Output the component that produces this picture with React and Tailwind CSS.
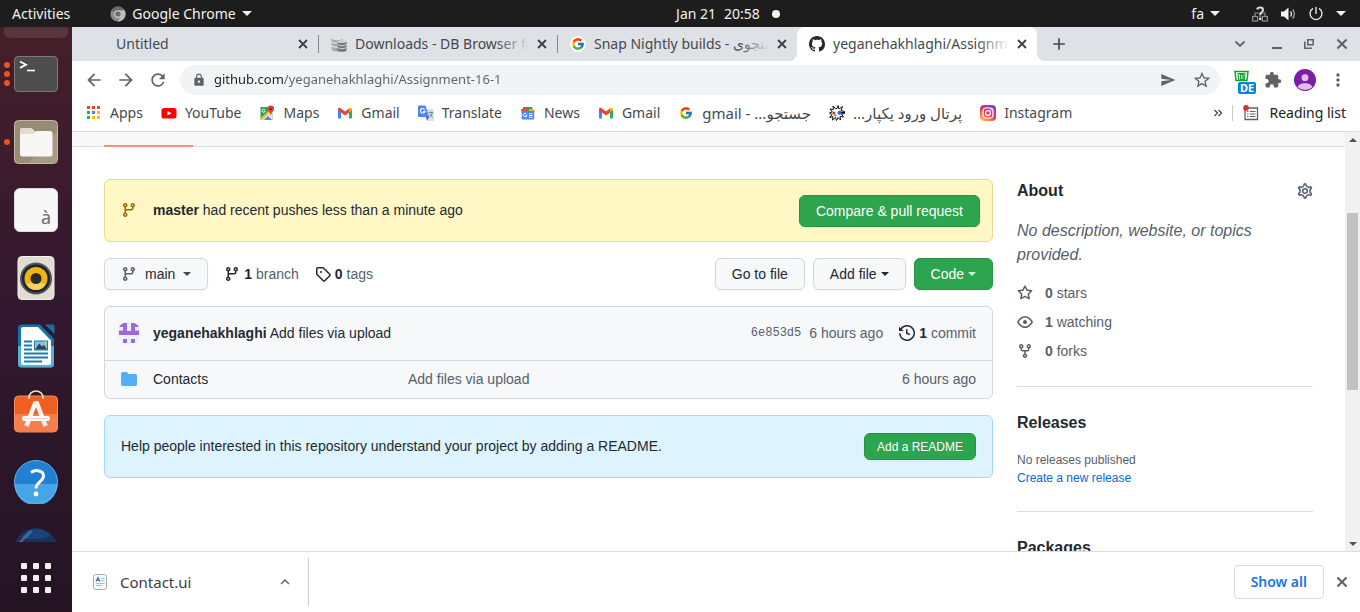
import {
  MdArrowBack,
  MdArrowForward,
  MdExpandLess,
  MdExtension,
  MdLock,
  MdMoreVert,
  MdAdd,
  MdRefresh,
  MdSend,
  MdStarBorder,
} from "react-icons/md";
import { FcGoogle } from "react-icons/fc";

/* ---------- shared glyphs ---------- */

const OCTICONS = {
  branch:
    "M11.75 2.5a.75.75 0 100 1.5.75.75 0 000-1.5zm-2.25.75a2.25 2.25 0 113 2.122V6A2.5 2.5 0 0110 8.5H6a1 1 0 00-1 1v1.128a2.251 2.251 0 11-1.5 0V5.372a2.25 2.25 0 111.5 0v1.836A2.492 2.492 0 016 7h4a1 1 0 001-1v-.628A2.25 2.25 0 019.5 3.25zM4.25 12a.75.75 0 100 1.5.75.75 0 000-1.5zM3.5 3.25a.75.75 0 111.5 0 .75.75 0 01-1.5 0z",
  tag: "M2.5 7.775V2.75a.25.25 0 01.25-.25h5.025a.25.25 0 01.177.073l6.25 6.25a.25.25 0 010 .354l-5.025 5.025a.25.25 0 01-.354 0l-6.25-6.25a.25.25 0 01-.073-.177zm-1.5 0V2.75C1 1.784 1.784 1 2.75 1h5.025c.464 0 .91.184 1.238.513l6.25 6.25a1.75 1.75 0 010 2.474l-5.026 5.026a1.75 1.75 0 01-2.474 0l-6.25-6.25A1.75 1.75 0 011 7.775zM6 5a1 1 0 100 2 1 1 0 000-2z",
  history:
    "M1.643 3.143L.427 1.927A.25.25 0 000 2.104V5.75c0 .138.112.25.25.25h3.646a.25.25 0 00.177-.427L2.715 4.215a6.5 6.5 0 11-1.18 4.458.75.75 0 10-1.493.154 8.001 8.001 0 101.6-5.684zM7.75 4a.75.75 0 01.75.75v2.992l2.028.812a.75.75 0 01-.557 1.392l-2.5-1A.75.75 0 017 8.25v-3.5A.75.75 0 017.75 4z",
  star: "M8 .25a.75.75 0 01.673.418l1.882 3.815 4.21.612a.75.75 0 01.416 1.279l-3.046 2.97.719 4.192a.75.75 0 01-1.088.791L8 12.347l-3.766 1.98a.75.75 0 01-1.088-.79l.72-4.194L.818 6.374a.75.75 0 01.416-1.28l4.21-.611L7.327.668A.75.75 0 018 .25zm0 2.445L6.615 5.5a.75.75 0 01-.564.41l-3.097.45 2.24 2.184a.75.75 0 01.216.664l-.528 3.084 2.769-1.456a.75.75 0 01.698 0l2.77 1.456-.53-3.084a.75.75 0 01.216-.664l2.24-2.183-3.096-.45a.75.75 0 01-.564-.41L8 2.694v.001z",
  eye: "M1.679 7.932c.412-.621 1.242-1.75 2.366-2.717C5.175 4.242 6.527 3.5 8 3.5c1.473 0 2.824.742 3.955 1.715 1.124.967 1.954 2.096 2.366 2.717a.119.119 0 010 .136c-.412.621-1.242 1.75-2.366 2.717C10.825 11.758 9.473 12.5 8 12.5c-1.473 0-2.824-.742-3.955-1.715C2.92 9.818 2.09 8.69 1.679 8.068a.119.119 0 010-.136zM8 2c-1.981 0-3.67.992-4.933 2.078C1.797 5.169.88 6.423.43 7.1a1.619 1.619 0 000 1.798c.45.678 1.367 1.932 2.637 3.024C4.329 13.008 6.019 14 8 14c1.981 0 3.67-.992 4.933-2.078 1.27-1.091 2.187-2.345 2.637-3.023a1.619 1.619 0 000-1.798c-.45-.678-1.367-1.932-2.637-3.023C11.671 2.992 9.981 2 8 2zm0 8a2 2 0 100-4 2 2 0 000 4z",
  fork: "M5 3.25a.75.75 0 11-1.5 0 .75.75 0 011.5 0zm0 2.122a2.25 2.25 0 10-1.5 0v.878A2.25 2.25 0 005.75 8.5h1.5v2.128a2.251 2.251 0 101.5 0V8.5h1.5a2.25 2.25 0 002.25-2.25v-.878a2.25 2.25 0 10-1.5 0v.878a.75.75 0 01-.75.75h-4.5A.75.75 0 015 6.25v-.878zm3.75 7.378a.75.75 0 11-1.5 0 .75.75 0 011.5 0zm3-8.75a.75.75 0 100-1.5.75.75 0 000 1.5z",
  folder:
    "M1.75 1A1.75 1.75 0 000 2.75v10.5C0 14.216.784 15 1.75 15h12.5A1.75 1.75 0 0016 13.25v-8.5A1.75 1.75 0 0014.25 3h-6.5a.25.25 0 01-.2-.1l-.9-1.2c-.33-.44-.85-.7-1.4-.7h-3.5z",
  github:
    "M8 0C3.58 0 0 3.58 0 8c0 3.54 2.29 6.53 5.47 7.59.4.07.55-.17.55-.38 0-.19-.01-.82-.01-1.49-2.01.37-2.53-.49-2.69-.94-.09-.23-.48-.94-.82-1.13-.28-.15-.68-.52-.01-.53.63-.01 1.08.58 1.23.82.72 1.21 1.87.87 2.33.66.07-.52.28-.87.51-1.07-1.78-.2-3.64-.89-3.64-3.95 0-.87.31-1.59.82-2.15-.08-.2-.36-1.02.08-2.12 0 0 .67-.21 2.2.82.64-.18 1.32-.27 2-.27.68 0 1.36.09 2 .27 1.53-1.04 2.2-.82 2.2-.82.44 1.1.16 1.92.08 2.12.51.56.82 1.27.82 2.15 0 3.07-1.87 3.75-3.65 3.95.29.25.54.73.54 1.48 0 1.07-.01 1.93-.01 2.2 0 .21.15.46.55.38A8.013 8.013 0 0016 8c0-4.42-3.58-8-8-8z",
};

function Octicon({ name, className = "" }) {
  return (
    <svg viewBox="0 0 16 16" className={`size-4 shrink-0 fill-current ${className}`} aria-hidden="true">
      <path fillRule="evenodd" d={OCTICONS[name]} />
    </svg>
  );
}

function GearIcon() {
  return (
    <svg viewBox="0.7 0.7 14.6 14.6" className="size-4 fill-none stroke-current" strokeWidth="1.4" aria-hidden="true">
      <path d="M7.429 1.525a6.593 6.593 0 011.142 0c.036.003.108.036.137.146l.289 1.105c.147.56.55.967.997 1.189.174.086.341.183.501.29.417.278.97.423 1.53.27l1.102-.303c.11-.03.175.016.195.046.219.31.41.641.573.989.014.031.022.11-.059.19l-.815.806c-.411.406-.562.957-.53 1.456a4.588 4.588 0 010 .582c-.032.499.119 1.05.53 1.456l.815.806c.08.08.073.159.059.19a6.494 6.494 0 01-.573.99c-.02.029-.086.074-.195.045l-1.103-.303c-.559-.153-1.112-.008-1.529.27-.16.107-.327.204-.5.29-.449.222-.851.628-.998 1.189l-.289 1.105c-.029.11-.101.143-.137.146a6.613 6.613 0 01-1.142 0c-.036-.003-.108-.037-.137-.146l-.289-1.105c-.147-.56-.55-.967-.997-1.189a4.502 4.502 0 01-.501-.29c-.417-.278-.97-.423-1.53-.27l-1.102.303c-.11.03-.175-.016-.195-.046a6.492 6.492 0 01-.573-.989c-.014-.031-.022-.11.059-.19l.815-.806c.411-.406.562-.957.53-1.456a4.587 4.587 0 010-.582c.032-.499-.119-1.05-.53-1.456l-.815-.806c-.08-.08-.073-.159-.059-.19a6.44 6.44 0 01.573-.99c.02-.029.086-.075.195-.045l1.103.303c.559.153 1.112.008 1.529-.27.16-.107.327-.204.5-.29.449-.222.851-.628.998-1.189l.289-1.105c.029-.11.101-.143.137-.146z" />
      <circle cx="8" cy="8" r="2.1" />
    </svg>
  );
}

function Caret({ className = "" }) {
  return (
    <svg viewBox="0 0 8 4" className={`h-1 w-2 shrink-0 fill-current ${className}`} aria-hidden="true">
      <path d="M0 0h8L4 4z" />
    </svg>
  );
}

function Cross({ className = "size-3.5" }) {
  return (
    <svg viewBox="0 0 14 14" className={`fill-none stroke-current ${className}`} strokeWidth="1.8" aria-hidden="true">
      <path d="M3 3l8 8M11 3l-8 8" />
    </svg>
  );
}

/* ---------- system bar ---------- */

function BarCaret() {
  return (
    <svg viewBox="0 0 10 5" className="h-[5px] w-2.5 fill-current" aria-hidden="true">
      <path d="M0 0h10L5 5z" />
    </svg>
  );
}

function SystemBar() {
  return (
    <header className="grid h-[27px] shrink-0 grid-cols-[1fr_auto_1fr] items-center bg-[#1d1d1d] px-3 text-sm text-[#f2f2f2]">
      <div className="flex items-center gap-10">
        <button type="button">Activities</button>
        <button type="button" className="flex items-center gap-1.5">
          <svg viewBox="0 0 16 16" className="size-4" aria-hidden="true">
            <circle cx="8" cy="8" r="7.6" fill="#8b8b8b" />
            <path d="M8 8 1.4 4.2A7.6 7.6 0 0 1 14.6 4.3H8z" fill="#6a6a6a" />
            <path d="M8 15.6 11.2 9.8 11.2 4.3h3.4A7.6 7.6 0 0 1 8 15.6z" fill="#bdbdbd" />
            <circle cx="8" cy="8" r="3.7" fill="#dcdcdc" />
            <circle cx="8" cy="8" r="2.8" fill="#6d6d6d" />
          </svg>
          Google Chrome
          <BarCaret />
        </button>
      </div>
      <div className="flex items-center gap-3 pl-24">
        <button type="button" className="flex gap-2">
          <span>Jan 21</span>
          <span>20:58</span>
        </button>
        <span className="size-2 rounded-full bg-[#f2f2f2]" />
      </div>
      <div className="flex items-center justify-end">
        <button type="button" className="flex items-center gap-1.5">
          fa
          <BarCaret />
        </button>
        <button type="button" aria-label="System menu" className="flex items-center gap-3 pr-0.5 pl-8">
          <svg viewBox="0 0 16 16" className="size-4" aria-hidden="true">
            <g fill="none" stroke="#8f8f8f" strokeWidth="1.2">
              <path d="M3 10.500V7h10v3.500M8 8v3" />
              <rect x="0.600" y="10.500" width="5" height="4.500" />
              <rect x="10.400" y="10.500" width="5" height="4.500" />
            </g>
            <path d="M5.200 3.500C5.600 0.900 11 0.600 11 3.900c0 2.200-2.700 2.400-2.700 5.200" fill="none" stroke="#dedede" strokeWidth="2" />
            <rect x="7.200" y="11.500" width="2.200" height="2.600" fill="#dedede" />
          </svg>
          <svg viewBox="0 0 16 16" className="size-4" aria-hidden="true">
            <path d="M1 5.500h3L8.500 1.500v13L4 10.500H1z" fill="#f2f2f2" />
            <path d="M10.500 5.500c1.200 1.200 1.200 3.800 0 5" fill="none" stroke="#f2f2f2" strokeWidth="1.300" />
            <path d="M12.600 3.500c2.300 2.300 2.300 6.700 0 9" fill="none" stroke="#a5a5a5" strokeWidth="1.300" />
          </svg>
          <svg viewBox="0 0 16 16" className="size-4" fill="none" stroke="#f2f2f2" strokeWidth="1.300" aria-hidden="true">
            <path d="M8 1v7M5 2.400a6 6 0 1 0 6 0" />
          </svg>
          <BarCaret />
        </button>
      </div>
    </header>
  );
}

/* ---------- dock ---------- */

function TerminalIcon() {
  return (
    <svg viewBox="0 0 44 44" className="size-11" aria-hidden="true">
      <rect x="0.500" y="4.500" width="43" height="35" rx="3.500" fill="#4d4d4d" stroke="#7c7873" />
      <path d="M6 9.500l6 3.200-6 3.200" fill="none" stroke="#fff" strokeWidth="1.800" />
      <path d="M13 18.500h8" stroke="#fff" strokeWidth="1.600" />
    </svg>
  );
}

function FilesIcon() {
  return (
    <svg viewBox="0 0 44 44" className="size-11" aria-hidden="true">
      <rect x="0.500" y="0.500" width="43" height="43" rx="4" fill="#978d76" stroke="#c1b99f" />
      <path d="M14 43 43 12V40a3.500 3.500 0 0 1-3.500 3z" fill="#a59c86" />
      <path d="M6 12V10a2 2 0 0 1 2-2h9.500l4.500 4.500V16H6z" fill="#e2ddd0" />
      <path d="M6 14h13l3-3h14a2.500 2.500 0 0 1 2.500 2.500V34a2.500 2.500 0 0 1-2.500 2.500H8.500A2.500 2.500 0 0 1 6 34z" fill="#f8f7f5" />
    </svg>
  );
}

function CharactersIcon() {
  return (
    <span className="flex size-11 items-end justify-end rounded-md border border-[#dcdcdc] bg-[#f7f7f7] pr-1.5 text-lg leading-7 text-[#6d6d6d]">
      à
    </span>
  );
}

function MusicIcon() {
  return (
    <svg viewBox="0 0 44 44" className="size-11" aria-hidden="true">
      <rect x="4" y="0.500" width="36" height="43" rx="4" fill="#e2ddd3" stroke="#f4f1ea" />
      <circle cx="22" cy="22.500" r="16" fill="#4f5561" />
      <circle cx="22" cy="22.500" r="14" fill="#1e222c" />
      <circle cx="22" cy="22.500" r="11.500" fill="#ecb514" />
      <path d="M12 28a11.500 11.500 0 0 0 20 0 40 40 0 0 0-20 0z" fill="#f6d35e" />
      <circle cx="22" cy="22.500" r="5.500" fill="#2b2b2b" />
    </svg>
  );
}

function WriterIcon() {
  return (
    <svg viewBox="0 0 44 44" className="size-11" aria-hidden="true">
      <path d="M8 0.500h18L40 15v25a3.500 3.500 0 0 1-3.500 3.500h-29A3.500 3.500 0 0 1 4 40V4.500a4 4 0 0 1 4-4z" fill="#1273a8" />
      <path d="M4 22h36v18a3.500 3.500 0 0 1-3.500 3.500h-29A3.500 3.500 0 0 1 4 40z" fill="#55aed4" />
      <path d="M31 0.500h8a1.500 1.500 0 0 1 1.500 1.500v8z" fill="#1b6f9f" />
      <path d="M9 3h15l13 13.500V39a2 2 0 0 1-2 2H9a2 2 0 0 1-2-2V5a2 2 0 0 1 2-2z" fill="#fafcfd" />
      <path d="M10 17.500h8M10 21.500h8M10 25.500h8M10 29.500h24M10 33.500h24M10 37.500h18" stroke="#1b7cb0" strokeWidth="2" />
      <rect x="20.500" y="17" width="13" height="9" fill="#7fc4e6" stroke="#1b7cb0" />
      <path d="M21 25.500l4-6 3 3 2-1.500 3 4.500z" fill="#3c4348" />
      <path d="M30 17.500h3v3z" fill="#f0c43c" />
    </svg>
  );
}

function SoftwareIcon() {
  return (
    <svg viewBox="0 2.500 44 44" className="size-11 overflow-visible" aria-hidden="true">
      <rect x="0.500" y="6.500" width="43" height="36" rx="4" fill="#f05f22" stroke="#f59064" />
      <path d="M1 24.500h42V39a3 3 0 0 1-3 3H4a3 3 0 0 1-3-3z" fill="#f47f4c" />
      <path d="M15 9.500V8a7 6.500 0 0 1 14 0v1.500" fill="none" stroke="#f5e3b5" strokeWidth="1.600" />
      <path d="M12.500 36.500 21 14h2l8.500 22.500" fill="none" stroke="#fff4ee" strokeWidth="4.500" />
      <rect x="8" y="26.500" width="28" height="5" rx="2.500" fill="#fff" />
      <path d="M10 29h24" stroke="#fbd2bf" strokeWidth="1" />
    </svg>
  );
}

function HelpIcon() {
  return (
    <svg viewBox="0 0 44 44" className="size-11" aria-hidden="true">
      <circle cx="22" cy="22" r="21.500" fill="#2180d3" />
      <path d="M0.500 24a21.500 21.500 0 0 0 43 0z" fill="#47a5e6" />
      <circle cx="22" cy="22" r="21.500" fill="none" stroke="#62b3ec" />
      <path d="M17 12.500c5-3.500 12.500-1.800 12.500 3.500 0 5.500-7.500 6-7.500 12.500" fill="none" stroke="#fff" strokeWidth="3" />
      <circle cx="22" cy="34" r="2.400" fill="#fff" />
    </svg>
  );
}

function MailIcon() {
  return (
    <svg viewBox="0 0 44 44" className="size-11" aria-hidden="true">
      <circle cx="22" cy="22" r="22" fill="#17335c" />
      <path d="M8 9C14 1 24-1 33 4l4 4-10 3H10z" fill="#1c427a" />
      <path d="M10 8l6-6 3 1-5 6-10 7z" fill="#2f6f9b" />
      <path d="M2 16l6-5 2 1-4 6z" fill="#7b4a68" />
    </svg>
  );
}

const DOCK_ITEMS = [
  { name: "Terminal", Icon: TerminalIcon, windows: 3 },
  { name: "Files", Icon: FilesIcon, windows: 1 },
  { name: "Characters", Icon: CharactersIcon, windows: 0 },
  { name: "Rhythmbox", Icon: MusicIcon, windows: 0 },
  { name: "LibreOffice Writer", Icon: WriterIcon, windows: 0 },
  { name: "Ubuntu Software", Icon: SoftwareIcon, windows: 0 },
  { name: "Help", Icon: HelpIcon, windows: 0 },
  { name: "Thunderbird", Icon: MailIcon, windows: 0 },
];

function Dock() {
  return (
    <nav aria-label="Dock" className="flex w-[72px] shrink-0 flex-col bg-linear-to-b from-[#451e29] via-[#32182f] to-[#241422]">
      <div className="flex min-h-0 flex-1 flex-col overflow-hidden px-1">
        <div className="mb-0.5 h-[11px] shrink-0 rounded-b-md bg-white/10" />
        {DOCK_ITEMS.map(({ name, Icon, windows }) => (
          <button key={name} type="button" aria-label={name} className="flex h-[68px] shrink-0 items-center">
            <span className="flex w-1.5 flex-col gap-[3px]">
              {Array.from({ length: windows }, (_, i) => (
                <span key={i} className="size-1.5 rounded-full bg-[#e95420]" />
              ))}
            </span>
            <span className="pl-1">
              <Icon />
            </span>
          </button>
        ))}
      </div>
      <button type="button" aria-label="Show applications" className="flex h-[70px] shrink-0 items-center justify-center pt-0.5">
        <span className="grid grid-cols-3 gap-1.5">
          {Array.from({ length: 9 }, (_, i) => (
            <span key={i} className="size-1.5 rounded-[1px] bg-[#f2f1ef]" />
          ))}
        </span>
      </button>
    </nav>
  );
}

/* ---------- browser chrome ---------- */

function DatabaseIcon() {
  return (
    <svg viewBox="0 0 16 16" className="size-4 shrink-0" aria-hidden="true">
      <path d="M0.500 2v11.500c0 2.500 11 2.500 11 0V2z" fill="#a9a9a9" />
      <ellipse cx="6" cy="2.200" rx="5.500" ry="2" fill="#e2e2e2" />
      <path d="M0.500 5.500c1 1.500 4 1.700 6 1.500M0.500 9.500c1 1.500 4 1.700 6 1.500" fill="none" stroke="#e6e6e6" strokeWidth="1.300" />
      <path d="M6.500 5.500v8.700c0 2.200 9 2.200 9 0V5.500z" fill="#777" />
      <ellipse cx="11" cy="5.500" rx="4.500" ry="1.600" fill="#cfcfcf" />
      <path d="M6.500 8.500c2 1.500 7 1.500 9 0M6.500 11.500c2 1.500 7 1.500 9 0" fill="none" stroke="#d6d6d6" />
    </svg>
  );
}

function TabLabel({ icon, title, fade = "from-[#dee1e6]" }) {
  return (
    <>
      <button type="button" className="flex min-w-0 flex-1 items-center gap-2">
        <span className="size-4 shrink-0">{icon}</span>
        <span className="relative min-w-0 flex-1 overflow-hidden text-left whitespace-nowrap">
          {title}
          <span className={`absolute inset-y-0 right-0 w-8 bg-linear-to-l to-transparent ${fade}`} />
        </span>
      </button>
      <button type="button" aria-label={`Close ${title}`} className="shrink-0 text-[#3c4043]">
        <Cross />
      </button>
    </>
  );
}

function TabStrip() {
  const tab = "my-2 flex w-[239px] shrink-0 items-center gap-1.5 pr-2 pl-3";
  return (
    <div className="flex h-[34px] shrink-0 bg-white text-sm text-[#45494d]">
      <div className="flex rounded-br-lg bg-[#dee1e6] pl-2">
        <div className={`${tab} border-r border-[#80868b]`}>
          <TabLabel title="Untitled" />
        </div>
        <div className={`${tab} border-r border-[#80868b]`}>
          <TabLabel icon={<DatabaseIcon />} title="Downloads - DB Browser for SQLite" />
        </div>
        <div className={tab}>
          <TabLabel
            icon={
              <span className="flex size-4 items-center justify-center rounded-full bg-white">
                <FcGoogle className="size-3.5" />
              </span>
            }
            title="Snap Nightly builds - جستجوی"
          />
        </div>
      </div>
      <div className="bg-[#dee1e6]">
        <div className="flex h-full w-60 items-center gap-1.5 rounded-t-lg bg-white pr-2 pl-3">
          <TabLabel icon={<Octicon name="github" className="text-[#24292f]" />} title="yeganehakhlaghi/Assignment-16-1" fade="from-white" />
        </div>
      </div>
      <div className="flex flex-1 items-center justify-between rounded-bl-lg bg-[#dee1e6] pr-2.5 pl-3">
        <button type="button" aria-label="New tab">
          <MdAdd className="size-5" />
        </button>
        <div className="flex items-center gap-[18px] text-[#5f6368]">
          <button type="button" aria-label="Search tabs" className="pr-1">
            <svg viewBox="0 0 16 16" className="size-4 fill-none stroke-current" strokeWidth="1.800" aria-hidden="true">
              <path d="M3.500 5.500 8 10l4.500-4.500" />
            </svg>
          </button>
          <button type="button" aria-label="Minimize" className="px-0.5">
            <svg viewBox="0 0 10 10" className="size-2.5 fill-current" aria-hidden="true">
              <path d="M0 8h10v2H0z" />
            </svg>
          </button>
          <button type="button" aria-label="Restore" className="px-0.5">
            <svg viewBox="0 0 10 10" className="size-2.5 fill-none stroke-current" strokeWidth="1.600" aria-hidden="true">
              <path d="M3.800 0.800h5.400v5H3.800zM0.800 2.500v6.700h7" />
            </svg>
          </button>
          <button type="button" aria-label="Close window">
            <Cross className="size-4" />
          </button>
        </div>
      </div>
    </div>
  );
}

function Toolbar() {
  return (
    <div className="flex h-[38px] shrink-0 items-center gap-3 bg-white px-3 text-[#5f6368]">
      <button type="button" aria-label="Back">
        <MdArrowBack className="size-5" />
      </button>
      <button type="button" aria-label="Forward">
        <MdArrowForward className="size-5" />
      </button>
      <button type="button" aria-label="Reload">
        <MdRefresh className="size-5" />
      </button>
      <div className="flex h-[30px] min-w-0 flex-1 items-center rounded-full bg-[#f1f3f4] pr-2 pl-3">
        <MdLock className="size-3.5 shrink-0" />
        <input
          type="text"
          aria-label="Address and search bar"
          defaultValue="github.com/yeganehakhlaghi/Assignment-16-1"
          className="ml-2 min-w-0 flex-1 bg-[linear-gradient(to_right,#202124_70px,#5f6368_70px)] bg-clip-text text-[13px] text-transparent outline-none"
        />
        <button type="button" aria-label="Send to your devices" className="mr-4">
          <MdSend className="size-4" />
        </button>
        <button type="button" aria-label="Bookmark this page">
          <MdStarBorder className="size-5" />
        </button>
      </div>
      <button type="button" aria-label="Extension, DE" className="relative size-5">
        <svg viewBox="-2 0 20 20" className="size-5" aria-hidden="true">
          <path d="M1 1.500h13l-1 9H2z" fill="#fff" stroke="#12a32f" strokeWidth="1.500" />
          <path d="M4 3.500h7l-.6 7H4.600z" fill="none" stroke="#12a32f" strokeWidth="1.100" />
          <path d="M5.800 4h4v6.500h-4z" fill="#12a32f" />
          <path d="M7.300 5h1v4h-1z" fill="#fff" />
        </svg>
        <span className="absolute top-3 left-1.5 rounded-xs bg-[#0b84d0] px-0.5 text-[11px] leading-3 font-bold text-white">DE</span>
      </button>
      <button type="button" aria-label="Extensions">
        <MdExtension className="size-[18px]" />
      </button>
      <button type="button" aria-label="Profile">
        <svg viewBox="0 0 22 22" className="size-[22px]" aria-hidden="true">
          <circle cx="11" cy="11" r="11" fill="#7b1fa2" />
          <circle cx="11" cy="8.700" r="3.400" fill="#e1bee7" />
          <path d="M3.600 18.200c1.400-5.300 13.400-5.300 14.800 0a11 11 0 0 1-14.800 0z" fill="#e1bee7" />
        </svg>
      </button>
      <button type="button" aria-label="Customize and control">
        <MdMoreVert className="size-5" />
      </button>
    </div>
  );
}

function AppsIcon() {
  const colors = ["#ea4335", "#ea4335", "#ea4335", "#34a853", "#4285f4", "#fbbc04", "#34a853", "#fbbc04", "#fbbc04"];
  return (
    <svg viewBox="0 0 16 16" className="size-4" aria-hidden="true">
      {colors.map((c, i) => (
        <rect key={i} x={1 + (i % 3) * 5} y={1 + Math.floor(i / 3) * 5} width="3" height="3" fill={c} />
      ))}
    </svg>
  );
}

function YouTubeIcon() {
  return (
    <svg viewBox="0 0 16 16" className="size-4" aria-hidden="true">
      <rect x="0.500" y="3" width="15" height="10.500" rx="2.600" fill="#f00" />
      <path d="M6.500 6v4.500l4-2.250z" fill="#fff" />
    </svg>
  );
}

function MapsIcon() {
  return (
    <svg viewBox="0 0 16 16" className="size-4" aria-hidden="true">
      <path d="M1.500 2h12v13h-12z" fill="#34a059" />
      <path d="M2 15 13.500 4v11z" fill="#e8e8e8" />
      <path d="M1.500 13.500 12 3.500l1.500 1.500L3.500 15h-2z" fill="#f7c92f" />
      <path d="M5 15l4-4 4 4z" fill="#4a86f0" />
      <path d="M5.800 4.600A1.600 1.600 0 1 0 6.200 6.200H4.800" fill="none" stroke="#fff" strokeWidth="0.900" />
      <path d="M11.800 0.500A3.300 3.300 0 0 0 8.500 3.800c0 2.400 2.700 3.200 3.300 7.200.6-4 3.300-4.800 3.300-7.200a3.300 3.300 0 0 0-3.300-3.300z" fill="#db4437" />
      <circle cx="11.800" cy="3.900" r="1.200" fill="#7b231e" />
    </svg>
  );
}

function GmailIcon() {
  return (
    <svg viewBox="0 0 16 16" className="size-4" aria-hidden="true">
      <path d="M1 4v8.500a1 1 0 0 0 1 1h2V6z" fill="#4285f4" />
      <path d="M15 4v8.500a1 1 0 0 1-1 1h-2V6z" fill="#34a853" />
      <path d="M12 3.300V7.300l3-2.300V4c0-1.400-1.500-1.600-2.300-1.100z" fill="#fbbc04" />
      <path d="M1 4c0-1.400 1.500-1.600 2.300-1.100L8 6.400l4.200-3.200V7.500L8 10.600 4 7.500 1 5z" fill="#ea4335" />
    </svg>
  );
}

function TranslateIcon() {
  return (
    <svg viewBox="0 0 16 16" className="size-4" aria-hidden="true">
      <path d="M6 4h9a1 1 0 0 1 1 1v10a1 1 0 0 1-1 1H9z" fill="#dcdfe3" />
      <path d="M1 0.500h6.500L11 12H1a1 1 0 0 1-1-1V1.500a1 1 0 0 1 1-1z" fill="#4a87ee" />
      <path d="M8 12h3l-2 3.500z" fill="#2a56c0" />
      <path d="M6.700 4.500A2.300 2.300 0 1 0 7 6.300H4.900" fill="none" stroke="#fff" strokeWidth="1.100" />
      <path d="M10.500 7.500h4.500M12.500 6.500v1M14.200 7.500c-.3 2-1.400 3.500-2.800 4.500M11.400 9c.8 1.400 1.800 2.300 3.200 3" fill="none" stroke="#6d7f8c" strokeWidth="0.900" />
    </svg>
  );
}

function NewsIcon() {
  return (
    <svg viewBox="0 0 16 16" className="size-4" aria-hidden="true">
      <path d="M3 2h9l1 4H3z" fill="#2f9e58" />
      <path d="M1 4 8 3.200l.5 4L1.600 8z" fill="#e9493a" />
      <path d="M9 4l6 .7L14.300 8H9z" fill="#f6b92a" />
      <path d="M1.800 6h12.400v8.500H1.800z" fill="#4a87ee" />
      <path d="M6.600 8.800A1.800 1.800 0 1 0 7 10.500H5.500M9 8.800h3.500M9 10.500h3.500M9 12.200h3.500" fill="none" stroke="#fff" strokeWidth="1" />
    </svg>
  );
}

function PortalIcon() {
  return (
    <svg viewBox="0 0 16 16" className="size-4" aria-hidden="true">
      <path
        d="M8 3.500 9 0.500 10 4 13.500 1.500 12 5.500 15.500 6.500 15.500 8.500 12.500 9 14.500 12 11 11.500 11.500 15 9 12.500 7.500 15.500 6.500 12.500 3.500 15 4 11.500 0.800 12.500 3 9.500 0.500 8 3.200 6.800 1 4 4.500 4.500 4 1 6.500 3.700z"
        fill="#fff"
        stroke="#111"
        strokeWidth="1"
      />
      <circle cx="4.800" cy="8" r="1.500" fill="#c23b2e" />
      <circle cx="10.500" cy="7.800" r="2" fill="#3c5fd0" />
      <path d="M12 7.500h3.500" stroke="#111" strokeWidth="1.500" />
      <circle cx="6.300" cy="10.300" r="1.100" fill="#2d8f46" />
    </svg>
  );
}

function InstagramIcon() {
  return (
    <svg viewBox="0 0 16 16" className="size-4" aria-hidden="true">
      <defs>
        <linearGradient id="insta" x1="0.200" y1="1" x2="0.800" y2="0">
          <stop offset="0" stopColor="#fdc24a" />
          <stop offset="0.450" stopColor="#ee3a55" />
          <stop offset="0.750" stopColor="#c32fa4" />
          <stop offset="1" stopColor="#5b4fd8" />
        </linearGradient>
      </defs>
      <rect width="16" height="16" rx="4" fill="url(#insta)" />
      <rect x="3" y="3" width="10" height="10" rx="3" fill="none" stroke="#fff" strokeWidth="1.200" />
      <circle cx="8" cy="8" r="2.400" fill="none" stroke="#fff" strokeWidth="1.200" />
      <circle cx="11" cy="5" r="0.700" fill="#fff" />
    </svg>
  );
}

function GoogleIcon() {
  return (
    <span className="flex size-4 items-center justify-center">
      <FcGoogle className="size-3.5" />
    </span>
  );
}

/* The right-to-left mark keeps the dots on the left of the Persian word. */
const BOOKMARKS = [
  { label: "Apps", Icon: AppsIcon },
  { label: "YouTube", Icon: YouTubeIcon },
  { label: "Maps", Icon: MapsIcon },
  { label: "Gmail", Icon: GmailIcon },
  { label: "Translate", Icon: TranslateIcon },
  { label: "News", Icon: NewsIcon },
  { label: "Gmail", Icon: GmailIcon },
  { label: "gmail - جستجو...\u200f", Icon: GoogleIcon, persian: true },
  { label: "پرتال ورود یکپار...\u200f", Icon: PortalIcon, persian: true },
  { label: "Instagram", Icon: InstagramIcon },
];

function BookmarksBar() {
  return (
    <div className="flex h-[33px] shrink-0 items-center justify-between border-b border-[#dadce0] bg-white px-3.5 pb-1 text-sm whitespace-nowrap text-[#45494d]">
      <div className="flex items-center gap-[18px]">
        {BOOKMARKS.map(({ label, Icon, persian }, i) => (
          <a key={i} href="#" className="flex items-center gap-2">
            <Icon />
            <span className={persian ? "text-[15px] leading-5" : ""}>{label}</span>
          </a>
        ))}
      </div>
      <div className="flex items-center gap-2.5">
        <button type="button" aria-label="More bookmarks">
          <svg viewBox="0 0 8 8" className="size-2 fill-none stroke-current" strokeWidth="1.400" aria-hidden="true">
            <path d="M0.500 1l3 3-3 3M4.500 1l3 3-3 3" />
          </svg>
        </button>
        <span className="h-4 w-px bg-[#c8cbcf]" />
        <button type="button" className="flex items-center gap-2.5 text-[#202124]">
          <svg viewBox="0 0 16 16" className="size-4" aria-hidden="true">
            <path d="M2 3h12.500v11.500H2z" fill="none" stroke="#5f6368" strokeWidth="1.300" />
            <path d="M4 6.500h1.500M7 6.500h5.500M4 9h1.500M7 9h5.500M4 11.500h1.500M7 11.500h5.500" stroke="#5f6368" strokeWidth="1.200" />
            <circle cx="3" cy="2.900" r="2.800" fill="#d93025" />
          </svg>
          Reading list
        </button>
      </div>
    </div>
  );
}

/* ---------- repository page ---------- */

const BTN = "flex h-8 items-center rounded-md border px-4 text-sm shadow-xs";
const BTN_PLAIN = "border-[#d5d8da] bg-[#f6f8fa] text-[#24292f]";
const BTN_GREEN = "border-[#2a9147] bg-[#2da44e] text-white";

function PushBanner() {
  return (
    <section className="flex items-center justify-between rounded-md border border-[#eed888] bg-[#fff8c5] pt-[15px] pr-3 pb-3.5 pl-4">
      <p className="flex items-center gap-4 pb-0.5">
        <Octicon name="branch" className="text-[#9a6700]" />
        <span>
          <strong>master</strong> had recent pushes less than a minute ago
        </span>
      </p>
      <button type="button" className={`${BTN} ${BTN_GREEN}`}>
        Compare &amp; pull request
      </button>
    </section>
  );
}

function FileNavigation() {
  return (
    <div className="mt-4 flex items-center">
      <button type="button" className={`${BTN} ${BTN_PLAIN} gap-2`}>
        <Octicon name="branch" className="text-[#57606a]" />
        main
        <Caret className="text-[#43494f]" />
      </button>
      <a href="#" className="ml-4 flex items-center gap-1 text-[#57606a]">
        <Octicon name="branch" className="text-[#24292f]" />
        <span>
          <strong className="text-[#24292f]">1</strong> branch
        </span>
      </a>
      <a href="#" className="ml-4 flex items-center gap-1 text-[#57606a]">
        <Octicon name="tag" className="text-[#24292f]" />
        <span>
          <strong className="text-[#24292f]">0</strong> tags
        </span>
      </a>
      <div className="ml-auto flex gap-2">
        <button type="button" className={`${BTN} ${BTN_PLAIN}`}>
          Go to file
        </button>
        <button type="button" className={`${BTN} ${BTN_PLAIN} gap-1`}>
          Add file
          <Caret />
        </button>
        <button type="button" className={`${BTN} ${BTN_GREEN} gap-1`}>
          Code
          <Caret className="opacity-80" />
        </button>
      </div>
    </div>
  );
}

function Avatar() {
  return (
    <svg viewBox="0 0 24 24" className="size-6 shrink-0" aria-hidden="true">
      <clipPath id="avatar-clip">
        <circle cx="12" cy="12" r="11.500" />
      </clipPath>
      <g clipPath="url(#avatar-clip)">
        <path d="M0 0h24v24H0z" fill="#f0f0f0" />
        <path d="M2 2h8v8h4V2h8v4h-4v3.500h4V14H2V9.500h4V6H2zM6 18h4v4H6zM14 18h4v4h-4z" fill="#9c68db" />
      </g>
    </svg>
  );
}

function FileBox() {
  return (
    <section className="mt-4 rounded-md border border-[#d0d7de] bg-[#f6f8fa]">
      <div className="flex h-[54px] items-center border-b border-[#d0d7de] pr-4 pb-px pl-3 text-[#57606a]">
        <Avatar />
        <p className="ml-3 flex-1 text-[#24292f]">
          <a href="#" className="font-bold">yeganehakhlaghi</a> <a href="#">Add files via upload</a>
        </p>
        <a href="#" className="font-[Liberation_Mono,monospace] text-xs">6e853d5</a>
        <span className="ml-2">6 hours ago</span>
        <a href="#" className="ml-4 flex items-center gap-1">
          <Octicon name="history" className="text-[#24292f]" />
          <span>
            <strong className="text-[#24292f]">1</strong> commit
          </span>
        </a>
      </div>
      <table className="w-full table-fixed">
        <tbody>
          <tr className="h-[37px]">
            <td className="w-12 pb-px pl-4 text-[#54aeff]">
              <Octicon name="folder" />
            </td>
            <td className="w-[255px] pb-px">
              <a href="#">Contacts</a>
            </td>
            <td className="pb-px text-[#57606a]">
              <a href="#">Add files via upload</a>
            </td>
            <td className="w-[170px] pr-4 pb-px text-right text-[#57606a]">6 hours ago</td>
          </tr>
        </tbody>
      </table>
    </section>
  );
}

function ReadmeBanner() {
  return (
    <section className="mt-4 flex h-[63px] items-center justify-between rounded-md border border-[#a5d8ff] bg-[#ddf4ff] px-4">
      <p className="pb-0.5">Help people interested in this repository understand your project by adding a README.</p>
      <button type="button" className="flex h-[27px] items-center rounded-md border border-[#2a9147] bg-[#2da44e] px-3 text-xs text-white shadow-xs">
        Add a README
      </button>
    </section>
  );
}

function Sidebar() {
  const stats = [
    { icon: "star", count: 0, label: "stars" },
    { icon: "eye", count: 1, label: "watching" },
    { icon: "fork", count: 0, label: "forks" },
  ];
  return (
    <aside className="w-[296px] shrink-0 text-[#57606a]">
      <div className="flex items-center justify-between text-base">
        <h2 className="font-bold text-[#24292f]">About</h2>
        <button type="button" aria-label="Edit repository details">
          <GearIcon />
        </button>
      </div>
      <p className="mt-4 text-base italic">No description, website, or topics provided.</p>
      <ul className="mt-[15px] flex flex-col gap-2">
        {stats.map(({ icon, count, label }) => (
          <li key={label}>
            <a href="#" className="flex h-[21px] items-center gap-3">
              <Octicon name={icon} />
              <span>
                <strong>{count}</strong> {label}
              </span>
            </a>
          </li>
        ))}
      </ul>
      <section className="mt-[25px] border-t border-[#d8dee4] pt-6 text-xs">
        <h2 className="text-base font-bold text-[#24292f]">Releases</h2>
        <p className="mt-4 leading-[18px]">No releases published</p>
        <a href="#" className="block leading-[18px] text-[#0969da]">
          Create a new release
        </a>
      </section>
      <section className="mt-6 border-t border-[#d8dee4] pt-6">
        <h2 className="text-base font-bold text-[#24292f]">Packages</h2>
      </section>
    </aside>
  );
}

function ScrollBar() {
  return (
    <div className="flex w-[15px] shrink-0 flex-col items-center bg-[#f1f1f1] text-[#505050]" aria-hidden="true">
      <div className="flex h-[15px] items-center">
        <Caret className="rotate-180" />
      </div>
      <div className="flex w-[11px] flex-1 flex-col">
        <div className="grow-[66]" />
        <div className="grow-[177] bg-[#c1c1c1]" />
        <div className="grow-[146]" />
      </div>
      <div className="flex h-[15px] items-center">
        <Caret />
      </div>
    </div>
  );
}

function RepositoryPage() {
  return (
    <div className="flex min-h-0 flex-1 bg-white">
      <main className="min-w-0 flex-1 overflow-hidden font-[Liberation_Sans,Arial,sans-serif] text-sm text-[#24292f]">
        <div className="flex h-[15px] items-end border-b border-[#d8dee4] bg-[#f6f8fa] px-8">
          <span className="-mb-px h-0.5 w-[89px] bg-[#fd8c73]" />
        </div>
        <div className="flex gap-6 px-8 pt-8">
          <div className="min-w-0 flex-1">
            <PushBanner />
            <FileNavigation />
            <FileBox />
            <ReadmeBanner />
          </div>
          <Sidebar />
        </div>
      </main>
      <ScrollBar />
    </div>
  );
}

/* ---------- download shelf ---------- */

function DownloadShelf() {
  return (
    <footer className="flex h-[61px] shrink-0 items-center border-t border-[#dadce0] bg-white pr-2.5 text-[#3c4043]">
      <div className="flex h-12 w-[237px] items-center border-r border-[#c8cbcf] pr-3.5 pl-5">
        <button type="button" className="flex items-center gap-3 text-[15px]">
          <svg viewBox="0 0 16 16" className="size-4" aria-hidden="true">
            <rect x="1.500" y="0.500" width="13" height="15" rx="2" fill="#f8f8f8" stroke="#a8a8a8" />
            <path d="M4 7.500 6 3.500l2 4M4.700 6.200h2.600" fill="none" stroke="#3f6fa8" strokeWidth="1.200" />
            <path d="M9 4.500h3.500M9 6.500h3.500M4 9.500h8.500M4 11.500h6" stroke="#8cc8ec" />
          </svg>
          Contact.ui
        </button>
        <button type="button" aria-label="Download options" className="ml-auto text-[#5f6368]">
          <MdExpandLess className="size-[18px]" />
        </button>
      </div>
      <button type="button" className="ml-auto h-[34px] rounded-sm border border-[#dadce0] px-4 text-sm font-semibold text-[#1a73e8]">
        Show all
      </button>
      <button type="button" aria-label="Close downloads bar" className="ml-2.5 text-[#5f6368]">
        <Cross className="size-4" />
      </button>
    </footer>
  );
}

export default function App() {
  return (
    <div className="flex h-screen flex-col overflow-hidden font-[Noto_Sans,DejaVu_Sans,sans-serif]">
      <SystemBar />
      <div className="flex min-h-0 flex-1">
        <Dock />
        <div className="flex min-w-0 flex-1 flex-col">
          <TabStrip />
          <Toolbar />
          <BookmarksBar />
          <RepositoryPage />
          <DownloadShelf />
        </div>
      </div>
    </div>
  );
}
